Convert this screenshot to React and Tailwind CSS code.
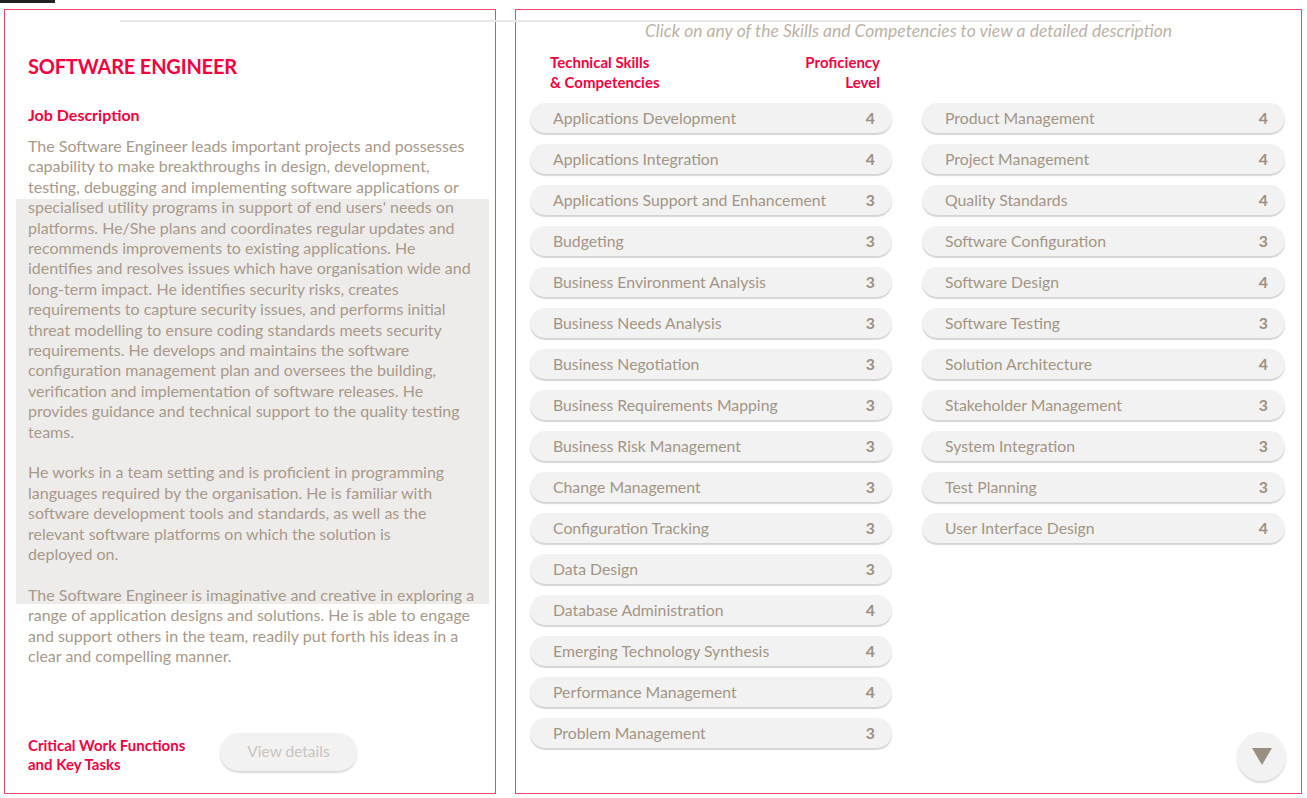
import React from "react";

const col1 = [
  ["Applications Development", 4],
  ["Applications Integration", 4],
  ["Applications Support and Enhancement", 3],
  ["Budgeting", 3],
  ["Business Environment Analysis", 3],
  ["Business Needs Analysis", 3],
  ["Business Negotiation", 3],
  ["Business Requirements Mapping", 3],
  ["Business Risk Management", 3],
  ["Change Management", 3],
  ["Configuration Tracking", 3],
  ["Data Design", 3],
  ["Database Administration", 4],
  ["Emerging Technology Synthesis", 4],
  ["Performance Management", 4],
  ["Problem Management", 3],
];

const col2 = [
  ["Product Management", 4],
  ["Project Management", 4],
  ["Quality Standards", 4],
  ["Software Configuration", 3],
  ["Software Design", 4],
  ["Software Testing", 3],
  ["Solution Architecture", 4],
  ["Stakeholder Management", 3],
  ["System Integration", 3],
  ["Test Planning", 3],
  ["User Interface Design", 4],
];

const paragraphs = [
  [
    "The Software Engineer leads important projects and possesses",
    "capability to make breakthroughs in design, development,",
    "testing, debugging and implementing software applications or",
    "specialised utility programs in support of end users' needs on",
    "platforms. He/She plans and coordinates regular updates and",
    "recommends improvements to existing applications. He",
    "identifies and resolves issues which have organisation wide and",
    "long-term impact. He identifies security risks, creates",
    "requirements to capture security issues, and performs initial",
    "threat modelling to ensure coding standards meets security",
    "requirements. He develops and maintains the software",
    "configuration management plan and oversees the building,",
    "verification and implementation of software releases. He",
    "provides guidance and technical support to the quality testing",
    "teams.",
  ],
  [
    "He works in a team setting and is proficient in programming",
    "languages required by the organisation. He is familiar with",
    "software development tools and standards, as well as the",
    "relevant software platforms on which the solution is",
    "deployed on.",
  ],
  [
    "The Software Engineer is imaginative and creative in exploring a",
    "range of application designs and solutions. He is able to engage",
    "and support others in the team, readily put forth his ideas in a",
    "clear and compelling manner.",
  ],
];

function Pill({ name, level }) {
  return (
    <div className="h-[30px] rounded-full bg-[#f2f2f2] shadow-[0_2px_1px_rgba(0,0,0,0.17)] flex items-center justify-between pl-[23px] pr-[17px] text-[15.8px] text-[#a39584]">
      <span>{name}</span>
      <span className="font-bold text-[#9d9081]">{level}</span>
    </div>
  );
}

export default function App() {
  const font = { fontFamily: "Lato, 'Liberation Sans', sans-serif" };
  return (
    <div className="relative w-[1307px] h-[798px] bg-white overflow-hidden" style={font}>
      <div className="absolute left-0 top-0 w-[55px] h-[3px] bg-[#222222]" />
      <div className="flex pl-[4px] pt-[9px]">
        {/* Left panel */}
        <div className="relative w-[492px] h-[785px] border border-[#f2456e] flex flex-col">
          <div className="absolute left-[11px] top-[189px] w-[473px] h-[405px] bg-[#eeecea]" />
          <div className="relative flex flex-col h-full pl-[23px] pr-[10px]">
            <div className="mt-[43px] text-[20px] leading-[26px] font-bold text-[#f5003f] tracking-[-0.2px]">
              SOFTWARE ENGINEER
            </div>
            <div className="mt-[26px] text-[16px] leading-[20px] font-bold text-[#f5003f]">
              Job Description
            </div>
            <div className="mt-[11px] text-[16px] leading-[20.4px] text-[#a8998a] flex flex-col gap-[20.4px]">
              {paragraphs.map((lines, i) => (
                <div key={i}>
                  {lines.map((l, j) => (
                    <div key={j} className="whitespace-nowrap">
                      {l}
                    </div>
                  ))}
                </div>
              ))}
            </div>
            <div className="mt-auto mb-[19px] flex items-start">
              <div className="w-[192px] text-[15px] leading-[19px] font-bold text-[#f5003f]">
                Critical Work Functions
                <br />
                and Key Tasks
              </div>
              <div className="-mt-[3px] w-[137px] h-[38px] rounded-full bg-[#f2f2f2] shadow-[0_2px_2px_rgba(0,0,0,0.15)] flex items-center justify-center text-[15.5px] text-[#cac3bb]">
                View details
              </div>
            </div>
          </div>
        </div>

        {/* Right panel */}
        <div className="relative ml-[19px] w-[787px] h-[785px] border border-[#f2456e] flex flex-col px-[14px]">
          <div className="mt-[11px] text-center italic text-[17.5px] leading-[20px] text-[#bdb2a6]">
            Click on any of the Skills and Competencies to view a detailed description
          </div>
          <div className="grid grid-cols-[362px_363px] gap-x-[30px] mt-[11px]">
            <div className="flex flex-col">
              <div className="flex justify-between pl-[20px] pr-[12px] text-[15px] leading-[20px] font-bold text-[#f5003f]">
                <div>
                  Technical Skills
                  <br />& Competencies
                </div>
                <div className="text-right">
                  Proficiency
                  <br />
                  Level
                </div>
              </div>
              <div className="mt-[11px] flex flex-col gap-[11px]">
                {col1.map(([n, l]) => (
                  <Pill key={n} name={n} level={l} />
                ))}
              </div>
            </div>
            <div className="flex flex-col">
              <div className="h-[40px]" />
              <div className="mt-[11px] flex flex-col gap-[11px]">
                {col2.map(([n, l]) => (
                  <Pill key={n} name={n} level={l} />
                ))}
              </div>
            </div>
          </div>
          <div className="absolute right-[15px] bottom-[12px] w-[49px] h-[49px] rounded-full bg-[#f2f2f2] shadow-[0_2px_2px_rgba(0,0,0,0.15)] flex items-center justify-center">
            <svg width="20" height="17" viewBox="0 0 20 17">
              <polygon points="0,0 20,0 10,17" fill="#9a8f80" />
            </svg>
          </div>
        </div>
      </div>
      <div className="absolute left-[120px] top-[20px] w-[1021px] h-[2px] bg-[#e8e8e8]" />
    </div>
  );
}
